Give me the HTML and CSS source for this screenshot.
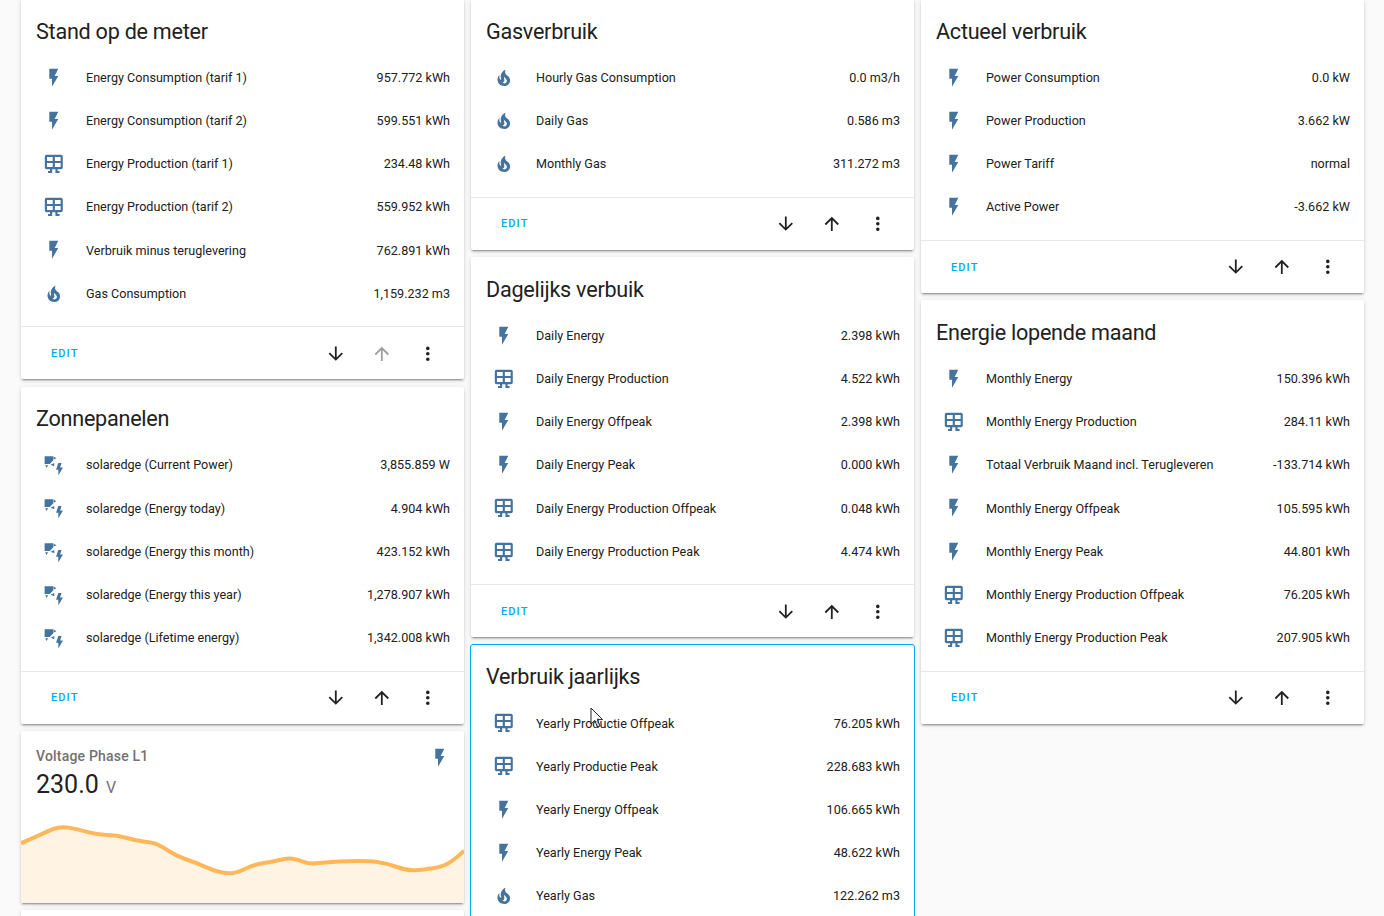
FILE: index.html
```html
<!DOCTYPE html>
<html lang="en">
<head>
    <meta charset="UTF-8">
    <title>Energie</title>
    <link rel="stylesheet" href="styles.css">
</head>
<body>
    <svg class="defs" width="0" height="0">
        <symbol id="i-flash" viewBox="0 0 24 24"><path d="M7,2V13H10V22L17,10H13L17,2H7Z"/></symbol>
        <symbol id="i-fire" viewBox="0 0 24 24"><path d="M17.66 11.2C17.43 10.9 17.15 10.64 16.89 10.38C16.22 9.78 15.46 9.35 14.82 8.72C13.33 7.26 13 4.85 13.95 3C13 3.23 12.17 3.75 11.46 4.32C8.87 6.4 7.85 10.07 9.07 13.22C9.11 13.32 9.15 13.42 9.15 13.55C9.15 13.77 9 13.97 8.8 14.05C8.57 14.15 8.33 14.09 8.14 13.93C8.08 13.88 8.04 13.83 8 13.76C6.87 12.33 6.69 10.28 7.45 8.64C5.78 10 4.87 12.3 5 14.47C5.06 14.97 5.12 15.47 5.29 15.97C5.43 16.57 5.7 17.17 6 17.7C7.08 19.43 8.95 20.67 10.96 20.92C13.1 21.19 15.39 20.8 17.03 19.32C18.86 17.66 19.5 15 18.56 12.72L18.43 12.46C18.22 12 17.66 11.2 17.66 11.2M14.5 17.5C14.22 17.74 13.76 18 13.4 18.1C12.28 18.5 11.16 17.94 10.5 17.28C11.69 17 12.4 16.12 12.61 15.23C12.78 14.43 12.46 13.77 12.33 13C12.21 12.26 12.23 11.63 12.5 10.94C12.69 11.32 12.89 11.7 13.13 12C13.9 13 15.11 13.44 15.37 14.8C15.41 14.94 15.43 15.08 15.43 15.23C15.46 16.05 15.1 16.95 14.5 17.5H14.5Z"/></symbol>
        <symbol id="i-panel" viewBox="0 0 24 24"><path d="M4 2H20A2 2 0 0 1 22 4V16A2 2 0 0 1 20 18H16.2V20H18.4V22.2H13.8V18H10.2V22.2H5.6V20H7.8V18H4A2 2 0 0 1 2 16V4A2 2 0 0 1 4 2ZM4.4 4.4V8.8H10.8V4.4H4.4ZM13.2 4.4V8.8H19.6V4.4H13.2ZM4.4 11.2V15.6H10.8V11.2H4.4ZM13.2 11.2V15.6H19.6V11.2H13.2Z"/></symbol>
        <symbol id="i-solar" viewBox="0 0 24 24"><path d="M1.8 2.5H11.5V7L7.5 11H1.8ZM12 3L15 4.6L12 6.2ZM8.5 12L12.5 10V13.5ZM2.5 12.5H5.8L3.8 15.5ZM17 10H20.6L19 15H22.2L17 23.8V17.5H14.5Z"/></symbol>
        <symbol id="i-down" viewBox="0 0 24 24"><path d="M11,4H13V16L18.5,10.5L19.92,11.92L12,19.84L4.08,11.92L5.5,10.5L11,16V4Z"/></symbol>
        <symbol id="i-up" viewBox="0 0 24 24"><path d="M13,20H11V8L5.5,13.5L4.08,12.08L12,4.16L19.92,12.08L18.5,13.5L13,8V20Z"/></symbol>
        <symbol id="i-dots" viewBox="0 0 24 24"><path d="M12,16A2,2 0 0,1 14,18A2,2 0 0,1 12,20A2,2 0 0,1 10,18A2,2 0 0,1 12,16M12,10A2,2 0 0,1 14,12A2,2 0 0,1 12,14A2,2 0 0,1 10,12A2,2 0 0,1 12,10M12,4A2,2 0 0,1 14,6A2,2 0 0,1 12,8A2,2 0 0,1 10,6A2,2 0 0,1 12,4Z"/></symbol>
    </svg>

    <div class="page">
        <div class="column">
            <div class="card">
                <h2>Stand op de meter</h2>
                <div class="rows">
                    <div class="row"><svg class="icon"><use href="#i-flash"/></svg><span class="name">Energy Consumption (tarif 1)</span><span class="value">957.772 kWh</span></div>
                    <div class="row"><svg class="icon"><use href="#i-flash"/></svg><span class="name">Energy Consumption (tarif 2)</span><span class="value">599.551 kWh</span></div>
                    <div class="row"><svg class="icon"><use href="#i-panel"/></svg><span class="name">Energy Production (tarif 1)</span><span class="value">234.48 kWh</span></div>
                    <div class="row"><svg class="icon"><use href="#i-panel"/></svg><span class="name">Energy Production (tarif 2)</span><span class="value">559.952 kWh</span></div>
                    <div class="row"><svg class="icon"><use href="#i-flash"/></svg><span class="name">Verbruik minus teruglevering</span><span class="value">762.891 kWh</span></div>
                    <div class="row"><svg class="icon"><use href="#i-fire"/></svg><span class="name">Gas Consumption</span><span class="value">1,159.232 m3</span></div>
                </div>
                <div class="actions">
                    <span class="edit">EDIT</span>
                    <svg class="btn"><use href="#i-down"/></svg>
                    <svg class="btn disabled"><use href="#i-up"/></svg>
                    <svg class="btn"><use href="#i-dots"/></svg>
                </div>
            </div>

            <div class="card">
                <h2>Zonnepanelen</h2>
                <div class="rows">
                    <div class="row"><svg class="icon"><use href="#i-solar"/></svg><span class="name">solaredge (Current Power)</span><span class="value">3,855.859 W</span></div>
                    <div class="row"><svg class="icon"><use href="#i-solar"/></svg><span class="name">solaredge (Energy today)</span><span class="value">4.904 kWh</span></div>
                    <div class="row"><svg class="icon"><use href="#i-solar"/></svg><span class="name">solaredge (Energy this month)</span><span class="value">423.152 kWh</span></div>
                    <div class="row"><svg class="icon"><use href="#i-solar"/></svg><span class="name">solaredge (Energy this year)</span><span class="value">1,278.907 kWh</span></div>
                    <div class="row"><svg class="icon"><use href="#i-solar"/></svg><span class="name">solaredge (Lifetime energy)</span><span class="value">1,342.008 kWh</span></div>
                </div>
                <div class="actions">
                    <span class="edit">EDIT</span>
                    <svg class="btn"><use href="#i-down"/></svg>
                    <svg class="btn"><use href="#i-up"/></svg>
                    <svg class="btn"><use href="#i-dots"/></svg>
                </div>
            </div>

            <div class="card sensor">
                <div class="sensor-head">
                    <div>
                        <div class="sensor-name">Voltage Phase L1</div>
                        <div class="sensor-value">230.0 <span class="sensor-unit">V</span></div>
                    </div>
                    <svg class="icon"><use href="#i-flash"/></svg>
                </div>
                <svg class="graph" viewBox="0 0 443 103" preserveAspectRatio="none">
                    <path class="graph-fill" d="M0 43.3L9.5 39.2Q19 35 25.5 31.9Q32 28.7 37 27.7Q42 26.7 49 27.9Q56 29 66 31.9Q76 34.7 86 34.9Q96 35 106 38Q116 41 124 41.7Q132 42.3 137 44.8Q142 47.3 149.5 52Q157 56.7 165.5 59.5Q174 62.3 183 66.3Q192 70.3 199 72Q206 73.7 211 73.2Q216 72.7 225 68.5Q234 64.3 241.5 63.3Q249 62.3 257.5 60.2Q266 58 271 58.7Q276 59.3 282.5 61.8Q289 64.3 299 63Q309 61.7 327.5 61.2Q346 60.7 356 62Q366 63.3 376 67Q386 70.7 394.5 70.2Q403 69.7 412 68.2Q421 66.7 427 63.4Q433 60 438 55.4L443 50.7V103H0Z"/>
                    <path class="graph-line" d="M0 43.3L9.5 39.2Q19 35 25.5 31.9Q32 28.7 37 27.7Q42 26.7 49 27.9Q56 29 66 31.9Q76 34.7 86 34.9Q96 35 106 38Q116 41 124 41.7Q132 42.3 137 44.8Q142 47.3 149.5 52Q157 56.7 165.5 59.5Q174 62.3 183 66.3Q192 70.3 199 72Q206 73.7 211 73.2Q216 72.7 225 68.5Q234 64.3 241.5 63.3Q249 62.3 257.5 60.2Q266 58 271 58.7Q276 59.3 282.5 61.8Q289 64.3 299 63Q309 61.7 327.5 61.2Q346 60.7 356 62Q366 63.3 376 67Q386 70.7 394.5 70.2Q403 69.7 412 68.2Q421 66.7 427 63.4Q433 60 438 55.4L443 50.7"/>
                </svg>
            </div>

            <div class="card filler"></div>
        </div>

        <div class="column">
            <div class="card">
                <h2>Gasverbruik</h2>
                <div class="rows">
                    <div class="row"><svg class="icon"><use href="#i-fire"/></svg><span class="name">Hourly Gas Consumption</span><span class="value">0.0 m3/h</span></div>
                    <div class="row"><svg class="icon"><use href="#i-fire"/></svg><span class="name">Daily Gas</span><span class="value">0.586 m3</span></div>
                    <div class="row"><svg class="icon"><use href="#i-fire"/></svg><span class="name">Monthly Gas</span><span class="value">311.272 m3</span></div>
                </div>
                <div class="actions">
                    <span class="edit">EDIT</span>
                    <svg class="btn"><use href="#i-down"/></svg>
                    <svg class="btn"><use href="#i-up"/></svg>
                    <svg class="btn"><use href="#i-dots"/></svg>
                </div>
            </div>

            <div class="card">
                <h2>Dagelijks verbuik</h2>
                <div class="rows">
                    <div class="row"><svg class="icon"><use href="#i-flash"/></svg><span class="name">Daily Energy</span><span class="value">2.398 kWh</span></div>
                    <div class="row"><svg class="icon"><use href="#i-panel"/></svg><span class="name">Daily Energy Production</span><span class="value">4.522 kWh</span></div>
                    <div class="row"><svg class="icon"><use href="#i-flash"/></svg><span class="name">Daily Energy Offpeak</span><span class="value">2.398 kWh</span></div>
                    <div class="row"><svg class="icon"><use href="#i-flash"/></svg><span class="name">Daily Energy Peak</span><span class="value">0.000 kWh</span></div>
                    <div class="row"><svg class="icon"><use href="#i-panel"/></svg><span class="name">Daily Energy Production Offpeak</span><span class="value">0.048 kWh</span></div>
                    <div class="row"><svg class="icon"><use href="#i-panel"/></svg><span class="name">Daily Energy Production Peak</span><span class="value">4.474 kWh</span></div>
                </div>
                <div class="actions">
                    <span class="edit">EDIT</span>
                    <svg class="btn"><use href="#i-down"/></svg>
                    <svg class="btn"><use href="#i-up"/></svg>
                    <svg class="btn"><use href="#i-dots"/></svg>
                </div>
            </div>

            <div class="card selected">
                <h2>Verbruik jaarlijks</h2>
                <div class="rows">
                    <div class="row"><svg class="icon"><use href="#i-panel"/></svg><span class="name">Yearly Productie Offpeak</span><span class="value">76.205 kWh</span></div>
                    <div class="row"><svg class="icon"><use href="#i-panel"/></svg><span class="name">Yearly Productie Peak</span><span class="value">228.683 kWh</span></div>
                    <div class="row"><svg class="icon"><use href="#i-flash"/></svg><span class="name">Yearly Energy Offpeak</span><span class="value">106.665 kWh</span></div>
                    <div class="row"><svg class="icon"><use href="#i-flash"/></svg><span class="name">Yearly Energy Peak</span><span class="value">48.622 kWh</span></div>
                    <div class="row"><svg class="icon"><use href="#i-fire"/></svg><span class="name">Yearly Gas</span><span class="value">122.262 m3</span></div>
                </div>
            </div>
        </div>

        <div class="column">
            <div class="card">
                <h2>Actueel verbruik</h2>
                <div class="rows">
                    <div class="row"><svg class="icon"><use href="#i-flash"/></svg><span class="name">Power Consumption</span><span class="value">0.0 kW</span></div>
                    <div class="row"><svg class="icon"><use href="#i-flash"/></svg><span class="name">Power Production</span><span class="value">3.662 kW</span></div>
                    <div class="row"><svg class="icon"><use href="#i-flash"/></svg><span class="name">Power Tariff</span><span class="value">normal</span></div>
                    <div class="row"><svg class="icon"><use href="#i-flash"/></svg><span class="name">Active Power</span><span class="value">-3.662 kW</span></div>
                </div>
                <div class="actions">
                    <span class="edit">EDIT</span>
                    <svg class="btn"><use href="#i-down"/></svg>
                    <svg class="btn"><use href="#i-up"/></svg>
                    <svg class="btn"><use href="#i-dots"/></svg>
                </div>
            </div>

            <div class="card">
                <h2>Energie lopende maand</h2>
                <div class="rows">
                    <div class="row"><svg class="icon"><use href="#i-flash"/></svg><span class="name">Monthly Energy</span><span class="value">150.396 kWh</span></div>
                    <div class="row"><svg class="icon"><use href="#i-panel"/></svg><span class="name">Monthly Energy Production</span><span class="value">284.11 kWh</span></div>
                    <div class="row"><svg class="icon"><use href="#i-flash"/></svg><span class="name">Totaal Verbruik Maand incl. Terugleveren</span><span class="value">-133.714 kWh</span></div>
                    <div class="row"><svg class="icon"><use href="#i-flash"/></svg><span class="name">Monthly Energy Offpeak</span><span class="value">105.595 kWh</span></div>
                    <div class="row"><svg class="icon"><use href="#i-flash"/></svg><span class="name">Monthly Energy Peak</span><span class="value">44.801 kWh</span></div>
                    <div class="row"><svg class="icon"><use href="#i-panel"/></svg><span class="name">Monthly Energy Production Offpeak</span><span class="value">76.205 kWh</span></div>
                    <div class="row"><svg class="icon"><use href="#i-panel"/></svg><span class="name">Monthly Energy Production Peak</span><span class="value">207.905 kWh</span></div>
                </div>
                <div class="actions">
                    <span class="edit">EDIT</span>
                    <svg class="btn"><use href="#i-down"/></svg>
                    <svg class="btn"><use href="#i-up"/></svg>
                    <svg class="btn"><use href="#i-dots"/></svg>
                </div>
            </div>
        </div>

        <svg class="cursor" width="14" height="22" viewBox="0 0 14 22"><path d="M1 1V17L4.8 13.4L7.4 20L10 18.9L7.4 12.6H12.6Z"/></svg>
    </div>
</body>
</html>
```

FILE: styles.css
```css
html, body {
    margin: 0;
    padding: 0;
    height: 100%;
    overflow: hidden;
}
body {
    font-family: Roboto, "Liberation Sans", sans-serif;
    background-color: #fafafa;
    color: #212121;
}
.defs {
    display: block;
    height: 0;
}
.page {
    position: relative;
    display: grid;
    grid-template-columns: repeat(3, 443px);
    gap: 7px;
    height: 917px;
    margin-top: -1px;
    padding-left: 21px;
    overflow: hidden;
    align-items: start;
}
.column {
    display: flex;
    flex-direction: column;
    gap: 7.2px;
}
.card {
    background: white;
    border-radius: 2px;
    box-shadow: 0 2px 2px 0 rgba(0, 0, 0, 0.14), 0 1px 5px 0 rgba(0, 0, 0, 0.12), 0 3px 1px -2px rgba(0, 0, 0, 0.2);
}
.card.selected {
    outline: 1px solid #03a9f4;
}
h2 {
    margin: 0;
    padding: 16.7px 15px 0;
    height: 40.1px;
    font-size: 21.6px;
    font-weight: 400;
    line-height: 32px;
    letter-spacing: -0.25px;
}
.rows {
    padding-bottom: 11.5px;
}
.row {
    display: flex;
    align-items: center;
    height: 43.2px;
    padding: 0 14px 0 21.5px;
    font-size: 12.6px;
}
.icon {
    width: 21.6px;
    height: 21.6px;
    fill: #44739e;
    flex: none;
}
.name {
    flex: 1;
    margin-left: 21.9px;
    white-space: nowrap;
}
.value {
    white-space: nowrap;
}
.actions {
    display: flex;
    align-items: center;
    height: 52px;
    padding: 0 25px 0 30px;
    border-top: 1px solid #e8e8e8;
    gap: 24.8px;
}
.edit {
    flex: 1;
    color: #03a9f4;
    font-size: 11px;
    font-weight: 500;
    letter-spacing: 1.1px;
}
.btn {
    width: 21.6px;
    height: 21.6px;
    fill: #212121;
    flex: none;
}
.btn.disabled {
    fill: #9e9e9e;
}
.sensor {
    overflow: hidden;
}
.sensor-head {
    display: flex;
    justify-content: space-between;
    height: 69px;
    padding: 15px 13.5px 0 15px;
    box-sizing: border-box;
}
.sensor-head .icon {
    margin-top: 1px;
}
.sensor-name {
    font-size: 14px;
    font-weight: 500;
    line-height: 20px;
    color: #727272;
    letter-spacing: 0.2px;
}
.sensor-value {
    font-size: 25px;
    line-height: 38px;
}
.sensor-unit {
    font-size: 16px;
    color: #727272;
    margin-left: 1px;
}
.graph {
    display: block;
    width: 443px;
    height: 103px;
}
.graph-fill {
    fill: #fff3e4;
}
.graph-line {
    fill: none;
    stroke: #ffb75a;
    stroke-width: 4;
    stroke-linejoin: round;
}
.filler {
    height: 300px;
}
.cursor {
    position: absolute;
    left: 590px;
    top: 708px;
    fill: white;
    fill-opacity: 0.6;
    stroke: #222;
    stroke-width: 1;
}
```
